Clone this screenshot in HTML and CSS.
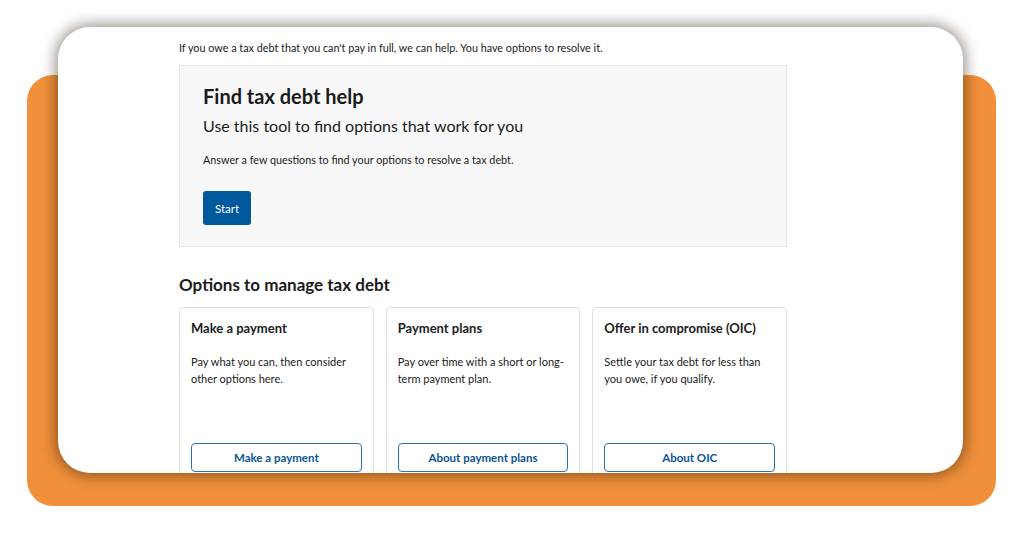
FILE: index.html
```html
<!DOCTYPE html>
<html lang="en">
<head>
    <meta charset="UTF-8">
    <meta name="viewport" content="width=device-width, initial-scale=1.0">
    <title>Tax debt help</title>
    <link rel="stylesheet" href="styles.css">
</head>
<body>
    <div class="stage">
        <div class="backdrop"></div>
        <div class="window">
            <div class="page">
                <p class="intro">If you owe a tax debt that you can't pay in full, we can help. You have options to resolve it.</p>
                <div class="tool">
                    <h2>Find tax debt help</h2>
                    <p class="lead">Use this tool to find options that work for you</p>
                    <p class="hint">Answer a few questions to find your options to resolve a tax debt.</p>
                    <button class="start">Start</button>
                </div>
                <h3>Options to manage tax debt</h3>
                <div class="cards">
                    <div class="card">
                        <h4>Make a payment</h4>
                        <p>Pay what you can, then consider other options here.</p>
                        <button class="more">Make a payment</button>
                    </div>
                    <div class="card">
                        <h4>Payment plans</h4>
                        <p>Pay over time with a short or long-term payment plan.</p>
                        <button class="more">About payment plans</button>
                    </div>
                    <div class="card">
                        <h4>Offer in compromise (OIC)</h4>
                        <p>Settle your tax debt for less than you owe, if you qualify.</p>
                        <button class="more">About OIC</button>
                    </div>
                </div>
            </div>
        </div>
    </div>
</body>
</html>
```

FILE: styles.css
```css
body {
    margin: 0;
    background: #fff;
    font-family: Lato, "Noto Sans", sans-serif;
    color: #1b1b1b;
}
.stage {
    display: grid;
    width: 1024px;
    height: 536px;
}
.backdrop, .window {
    grid-area: 1 / 1;
    align-self: start;
    justify-self: start;
}
.backdrop {
    margin: 75px 0 0 27px;
    width: 969px;
    height: 431px;
    background: #f0903a;
    border-radius: 26px;
}
.window {
    margin: 27px 0 0 58px;
    width: 905px;
    height: 446px;
    background: #fff;
    border-radius: 32px;
    box-shadow: 0 0 14px 3px rgba(40, 20, 0, 0.45);
    overflow: hidden;
}
.page {
    width: 608px;
    margin-left: 121px;
    padding-top: 13px;
}
.intro {
    margin: 0 0 9px;
    font-size: 10.8px;
    line-height: 16px;
}
.tool {
    background: #f8f8f8;
    border: 1px solid #e4e4e4;
    padding: 17px 23px 21px;
}
.tool h2 {
    margin: 0;
    font-size: 20px;
    line-height: 26px;
}
.lead {
    margin: 6px 0 0;
    font-size: 16px;
    line-height: 22px;
}
.hint {
    margin: 14px 0 0;
    font-size: 10.8px;
    line-height: 18px;
}
.start {
    display: block;
    margin-top: 22px;
    width: 48px;
    height: 34px;
    padding: 0;
    background: #00599c;
    color: #fff;
    border: none;
    border-radius: 3px;
    font-family: inherit;
    font-size: 11.5px;
}
h3 {
    margin: 27px 0 11px;
    font-size: 17px;
    line-height: 22px;
}
.cards {
    display: grid;
    grid-template-columns: repeat(3, minmax(0, 1fr));
    gap: 12px;
}
.card {
    box-sizing: border-box;
    border: 1px solid #dfdfdf;
    border-radius: 4px;
    padding: 11px 11px 20px;
    height: 200px;
}
.card h4 {
    margin: 0;
    font-size: 13px;
    line-height: 18px;
}
.card p {
    margin: 16px 0 0;
    font-size: 11px;
    line-height: 17px;
    height: 90px;
}
.more {
    display: block;
    box-sizing: border-box;
    width: 100%;
    height: 29px;
    background: #fff;
    border: 1.5px solid #2d72b5;
    border-radius: 4px;
    color: #0b5394;
    font-family: inherit;
    font-size: 11.5px;
    font-weight: bold;
}
```
